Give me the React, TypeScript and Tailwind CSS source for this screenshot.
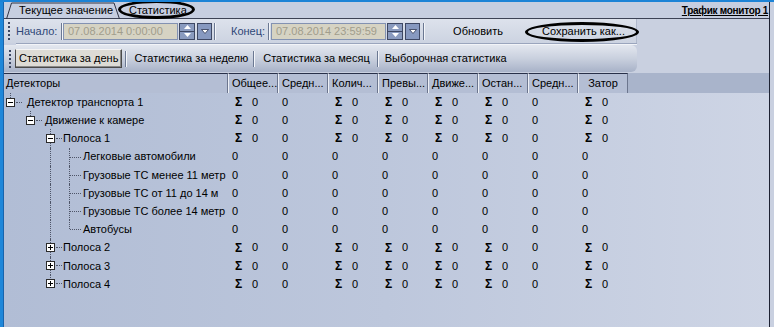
import React from "react";

type Row = {
  level: number;
  label: string;
  box?: "minus" | "plus";
  leaf?: boolean;
  last?: boolean;
};

const rows: Row[] = [
  { level: 0, label: "Детектор транспорта 1", box: "minus" },
  { level: 1, label: "Движение к камере", box: "minus" },
  { level: 2, label: "Полоса 1", box: "minus" },
  { level: 3, label: "Легковые автомобили", leaf: true },
  { level: 3, label: "Грузовые ТС менее 11 метр", leaf: true },
  { level: 3, label: "Грузовые ТС от 11 до 14 м", leaf: true },
  { level: 3, label: "Грузовые ТС более 14 метр", leaf: true },
  { level: 3, label: "Автобусы", leaf: true, last: true },
  { level: 2, label: "Полоса 2", box: "plus" },
  { level: 2, label: "Полоса 3", box: "plus" },
  { level: 2, label: "Полоса 4", box: "plus", last: true },
];

const headers = ["Общее...", "Средн...", "Колич...", "Превы...", "Движе...", "Остан...", "Средн..."];
// columns with a sum sign in group rows
const sigmaCols = [true, false, true, true, true, true, false, true];

const Grip = () => (
  <div className="flex flex-col gap-[2px]">
    {[0, 1, 2, 3, 4].map((i) => (
      <div key={i} className="w-[2px] h-[2px] bg-[#3b4662]" />
    ))}
  </div>
);

const Sep = ({ h = "h-[17px]" }: { h?: string }) => (
  <div className={`w-[2px] ${h} border-l border-l-[#6b7892] border-r border-r-[#f4f6fa]`} />
);

const Tri = ({ up }: { up?: boolean }) => (
  <svg width="7" height="4" viewBox="0 0 7 4">
    <polygon points={up ? "0,4 3.5,0 7,4" : "0,0 3.5,4 7,0"} fill="#ffffff" />
  </svg>
);

const DateBox = ({ value }: { value: string }) => (
  <div className="flex items-center gap-[1px]">
    <div className="w-[115px] h-[17px] bg-[#d6d3c3] border border-[#8392b2] flex items-center pl-[4px] text-[#a19d8c]">
      {value}
    </div>
    <div className="w-[16px] h-[17px] flex flex-col border border-[#3e4864] bg-[#8a9bbf]">
      <div className="flex-1 flex items-center justify-center border-b border-[#3e4864]">
        <Tri up />
      </div>
      <div className="flex-1 flex items-center justify-center">
        <Tri />
      </div>
    </div>
    <div className="ml-[1px] w-[15px] h-[17px] flex items-center justify-center border border-[#3e4864] bg-[#8799c0]">
      <svg width="8" height="5" viewBox="0 0 8 5">
        <polygon points="0.5,0.5 4,4.5 7.5,0.5" fill="#ffffff" stroke="#2c3550" strokeWidth="0.8" />
      </svg>
    </div>
  </div>
);

const TreeBox = ({ kind }: { kind: "minus" | "plus" }) => (
  <svg width="9" height="9" viewBox="0 0 9 9" className="shrink-0">
    <rect x="0.5" y="0.5" width="8" height="8" fill="#ffffff" stroke="#2a2a2a" />
    <line x1="2" y1="4.5" x2="7" y2="4.5" stroke="#000" />
    {kind === "plus" && <line x1="4.5" y1="2" x2="4.5" y2="7" stroke="#000" />}
  </svg>
);

const dot = "border-dotted border-[#4e5568]";

const TreeCell = ({ row }: { row: Row }) => {
  const boxLeft = [2, 22, 42][row.level] ?? 0;
  const textLeft = [23, 41, 59, 79][row.level];
  return (
    <div className="relative w-[224px] h-full flex items-center" style={{ paddingLeft: textLeft }}>
      {/* connector lines */}
      {row.level === 0 && <div className={`absolute left-[6px] top-0 h-[5px] border-l ${dot}`} />}
      {row.level === 1 && <div className={`absolute left-[26px] top-0 h-1/2 border-l ${dot}`} />}
      {row.level >= 2 && (
        <div
          className={`absolute left-[46px] top-0 border-l ${dot} ${
            row.level === 2 && row.last ? "h-1/2" : "h-full"
          }`}
        />
      )}
      {row.leaf && (
        <>
          <div className={`absolute left-[65px] top-0 border-l ${dot} ${row.last ? "h-1/2" : "h-full"}`} />
          <div className={`absolute left-[66px] top-1/2 w-[11px] border-t ${dot}`} />
        </>
      )}
      {row.box && (
        <div className="absolute top-0 h-full flex items-center" style={{ left: boxLeft }}>
          <TreeBox kind={row.box} />
          <div className={`w-[6px] ml-[1px] border-t ${dot}`} />
        </div>
      )}
      <span className="whitespace-nowrap">{row.label}</span>
    </div>
  );
};

const DataCells = ({ leaf }: { leaf?: boolean }) => (
  <>
    {sigmaCols.map((s, i) =>
      s && !leaf ? (
        <div key={i} className="w-[50px] h-full flex items-center pl-[7px]">
          <span className="w-[17px] font-bold text-[12px]">Σ</span>
          <span>0</span>
        </div>
      ) : (
        <div key={i} className="w-[50px] h-full flex items-center pl-[4px]">
          0
        </div>
      )
    )}
  </>
);

export default function App() {
  return (
    <div className="w-[774px] h-[327px] flex overflow-hidden bg-[#c9d0e0] border-t-2 border-[#1c83d6] font-['Liberation_Sans',Arial,sans-serif] text-[11px] text-black">
      <div className="w-[4px] flex">
        <div className="w-[3px] bg-[#1f87d9]" />
        <div className="w-[1px] bg-[#1864ad]" />
      </div>

      <div className="w-[765px] flex flex-col">
        {/* tab strip */}
        <div className="h-[17px] flex items-end border-b border-[#3c4255] bg-[#c6cee0]">
          <div className="relative w-[114px] h-full flex items-center ml-[2px]">
            <svg width="114" height="17" viewBox="0 0 114 17" className="absolute inset-0">
              <polyline points="0.5,17 5.5,1 108,1 113.5,17" fill="none" stroke="#2f3445" />
            </svg>
            <span className="pl-[13px] pt-[1px]">Текущее значение</span>
          </div>
          <div className="relative w-[72px] h-full flex items-center">
            <span className="pl-[9px] pt-[1px]">Статистика</span>
            <div className="absolute left-[-2px] right-[-3px] top-[-2px] bottom-[-1px] rounded-[50%] border-[3px] border-black" />
          </div>
          <div className="ml-auto mr-[1px] h-full flex items-center font-bold text-[10px] underline tracking-[-0.3px]">
            Трафик монитор 1
          </div>
        </div>

        {/* toolbar */}
        <div className="w-[633px] flex flex-col">
          <div className="h-[24px] flex items-center bg-linear-to-b from-[#dde2ec] to-[#ccd3e1] border-r border-[#b0b9cc]">
            <div className="ml-[4px]">
              <Grip />
            </div>
            <span className="ml-[6px] w-[45px] text-[#2f4777]">Начало:</span>
            <Sep />
            <DateBox value="07.08.2014 0:00:00" />
            <div className="ml-[2px]">
              <Sep />
            </div>
            <span className="ml-[15px] w-[37px] text-[#2f4777]">Конец:</span>
            <Sep />
            <div className="ml-[1px]">
              <DateBox value="07.08.2014 23:59:59" />
            </div>
            <div className="ml-[3px]">
              <Sep />
            </div>
            <div className="w-[106px] text-center">Обновить</div>
            <div className="relative w-[105px] h-full flex items-center justify-center">
              Сохранить как...
              <div className="absolute left-[-6px] right-[-3px] top-[3px] bottom-[1px] rounded-[50%] border-[3px] border-black" />
            </div>
          </div>
          <div className="h-[2px] ml-[12px] border-t border-[#9aa5bd] border-b border-b-[#f2f4f8]" />
          <div className="h-[27px] flex items-center bg-linear-to-b from-[#e3e7ef] via-[#c9d0de] to-[#a8b2c8] rounded-r-[6px]">
            <div className="ml-[5px]">
              <Grip />
            </div>
            <div className="ml-[4px] h-[19px] px-[3px] flex items-center bg-[#dddbd5] border border-[#4a4a4a] border-t-[#f4f4f4] shadow-[inset_-1px_-1px_0_#8a8a8a]">
              Статистика за день
            </div>
            <div className="ml-[3px]">
              <Sep h="h-[16px]" />
            </div>
            <span className="ml-[7px]">Статистика за неделю</span>
            <div className="ml-[5px]">
              <Sep h="h-[16px]" />
            </div>
            <span className="ml-[8px]">Статистика за месяц</span>
            <div className="ml-[7px]">
              <Sep h="h-[16px]" />
            </div>
            <span className="ml-[6px]">Выборочная статистика</span>
          </div>
        </div>

        {/* grid */}
        <div className="mt-[1px] flex-1 flex flex-col bg-linear-to-r from-[#b1bdd5] via-[#bdc7dc] to-[#ced5e5]">
          <div className="h-[20px] flex bg-[#a9b4cb]">
            <div className="w-[224px] h-full flex items-center pl-[2px] bg-[#b4bed4] border-t border-[#283049] border-r border-r-[#6c768e]">
              Детекторы
            </div>
            {headers.map((h, i) => (
              <div
                key={i}
                className="w-[50px] h-full flex items-center pl-[3px] bg-[#b4bed4] border-t border-[#283049] border-l border-l-[#eef1f7] border-r border-r-[#6c768e] whitespace-nowrap overflow-hidden"
              >
                {h}
              </div>
            ))}
            <div className="w-[50px] h-full flex items-center justify-center bg-[#b4bed4] border-t border-[#283049] border-l border-l-[#eef1f7] border-r border-r-[#6c768e]">
              Затор
            </div>
          </div>
          {rows.map((r, i) => (
            <div key={i} className="h-[18.2px] flex">
              <TreeCell row={r} />
              <DataCells leaf={r.leaf} />
            </div>
          ))}
        </div>
      </div>

      <div className="w-[1px] bg-[#1d2233]" />
      <div className="flex-1 bg-[#c9d0e0]" />
    </div>
  );
}
